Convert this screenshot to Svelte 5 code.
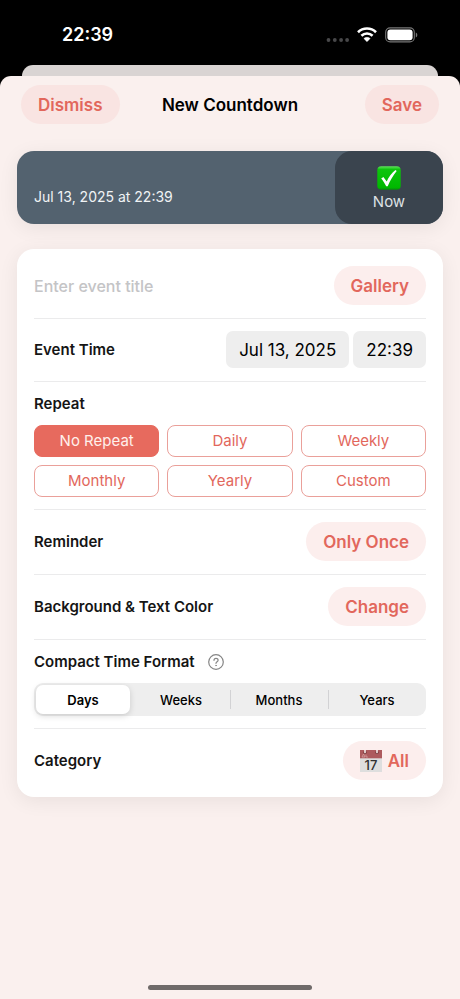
<script>
  const repeatOptions = ['No Repeat', 'Daily', 'Weekly', 'Monthly', 'Yearly', 'Custom'];
  const formats = ['Days', 'Weeks', 'Months', 'Years'];
  let repeat = $state('No Repeat');
  let format = $state('Days');
  let title = $state('');
</script>

<div class="screen">
  <div class="status">
    <span class="clock">22:39</span>
    <div class="indicators">
      <svg width="24" height="6" viewBox="0 0 24 6" fill="#48484a" aria-hidden="true">
        <circle cx="3.500" cy="3" r="1.900" /><circle cx="9.800" cy="3" r="1.900" /><circle cx="16.100" cy="3" r="1.900" /><circle cx="22.100" cy="3" r="1.900" />
      </svg>
      <svg width="20" height="15" viewBox="0 0 20 15" aria-hidden="true">
        <g fill="none" stroke="#fff" stroke-width="2.6">
          <path d="M1 5.2C6 .3 14 .3 19 5.2" />
          <path d="M4.4 8.8c3.2-3 8-3 11.2 0" />
        </g>
        <path d="M10 14.7l-3.2-3.2c1.8-1.6 4.6-1.6 6.4 0z" fill="#fff" stroke="#fff" stroke-width=".4" stroke-linejoin="round" />
      </svg>
      <svg width="33" height="16" viewBox="0 0 33 16" aria-hidden="true">
        <rect x=".7" y=".9" width="28.6" height="14" rx="4.4" fill="none" stroke="#777" stroke-width="1.1" />
        <rect x="2.4" y="2.6" width="25.2" height="10.6" rx="3" fill="#fff" />
        <path d="M30.8 5.4c2 .8 2 4.2 0 5z" fill="#777" />
      </svg>
    </div>
  </div>

  <div class="behind"></div>

  <main class="sheet">
    <header>
      <button class="pill">Dismiss</button>
      <h1>New Countdown</h1>
      <button class="pill">Save</button>
    </header>

    <section class="preview">
      <p class="date">Jul 13, 2025 at 22:39</p>
      <div class="now">
        <svg width="24" height="24" viewBox="0 0 24 24" role="img" aria-label="Done">
          <defs>
            <linearGradient id="green" x2="0" y2="1">
              <stop offset="0" stop-color="#5fe35a" /><stop offset=".14" stop-color="#0dc40d" /><stop offset=".9" stop-color="#00b900" /><stop offset="1" stop-color="#078f0c" />
            </linearGradient>
          </defs>
          <rect x=".3" y=".3" width="23.4" height="23.4" rx="4" fill="url(#green)" />
          <path d="M4.2 12.4l2.2-1.3 3.3 4.5C11.600 11 14.600 7 18.400 3.900l1.300 1C16 9.400 13.200 14.300 10.700 20.300H9.200C7.800 17.400 6.200 14.700 4.200 12.400z" fill="#fff" />
        </svg>
        <span>Now</span>
      </div>
    </section>

    <form class="card" onsubmit={(e) => e.preventDefault()}>
      <div class="row">
        <input class="title" type="text" placeholder="Enter event title" aria-label="Event title" bind:value={title} />
        <button type="button" class="pill">Gallery</button>
      </div>

      <div class="row">
        <h2>Event Time</h2>
        <div class="pickers">
          <button type="button" class="picker">Jul 13, 2025</button>
          <button type="button" class="picker">22:39</button>
        </div>
      </div>

      <fieldset class="block">
        <legend>Repeat</legend>
        <div class="choices">
          {#each repeatOptions as option}
            <label class="choice" class:active={repeat === option}>
              <input type="radio" name="repeat" value={option} bind:group={repeat} />
              {option}
            </label>
          {/each}
        </div>
      </fieldset>

      <div class="row">
        <h2>Reminder</h2>
        <button type="button" class="pill">Only Once</button>
      </div>

      <div class="row">
        <h2>Background &amp; Text Color</h2>
        <button type="button" class="pill">Change</button>
      </div>

      <div class="block" role="radiogroup" aria-labelledby="format-label">
        <div class="heading">
          <h2 id="format-label">Compact Time Format</h2>
          <button type="button" class="help" aria-label="Help">
            <svg width="16" height="16" viewBox="0 0 16 16" fill="none" stroke="#858585" stroke-linecap="round" aria-hidden="true">
              <circle cx="8" cy="8" r="7.300" stroke-width="1.200" />
              <path d="M6 6.300C6 3.700 10.100 3.800 10.100 6.200 10.100 7.700 8 7.700 8 9.300" stroke-width="1.200" />
              <circle cx="8" cy="11.500" r=".45" fill="#858585" stroke-width=".6" />
            </svg>
          </button>
        </div>
        <div class="segments">
          {#each formats as option}
            <label class="segment" class:active={format === option}>
              <input type="radio" name="format" value={option} bind:group={format} />
              {option}
            </label>
          {/each}
        </div>
      </div>

      <div class="row">
        <h2>Category</h2>
        <button type="button" class="pill category">
          <svg width="22" height="22" viewBox="0 0 22 22" aria-hidden="true">
            <rect width="22" height="22" fill="#dedede" />
            <rect width="22" height="8.300" fill="#ad5a5e" />
            <path d="M2 7l1.500-3L5 7zM6 7V4.500M8 7H6" stroke="#d9a5a6" stroke-width=".7" fill="none" />
            <g fill="#6b3033"><circle cx="5" cy="2.400" r="1.600" /><circle cx="17" cy="2.400" r="1.600" /></g>
            <path d="M5 0v2.500M17 0v2.500" stroke="#f4e6e5" stroke-width="1.700" stroke-linecap="round" />
            <text x="11" y="19.500" text-anchor="middle" font-size="13" font-weight="500" fill="#303030">17</text>
          </svg>
          All
        </button>
      </div>
    </form>

    <div class="home"></div>
  </main>
</div>

<style>
  :global(body) { margin: 0; background: #000; }
  .screen {
    min-height: 100vh;
    display: flex;
    flex-direction: column;
    background: #000;
    color: #000;
    font-family: Inter, "Liberation Sans", sans-serif;
  }
  .screen *, .screen { box-sizing: border-box; }
  button, input { font: inherit; color: inherit; margin: 0; }
  button { border: 0; cursor: pointer; white-space: nowrap; }
  h1, h2, p { margin: 0; }

  .status {
    display: flex;
    justify-content: space-between;
    align-items: center;
    height: 65px;
    padding: 4px 42px 0 62px;
    color: #fff;
  }
  .clock { font-size: 18px; font-weight: 600; line-height: 24px; }
  .indicators { display: flex; align-items: center; gap: 8px; }
  .indicators svg:first-child { margin-top: 10px; }

  .behind {
    height: 11px;
    margin: 0 22px;
    border-radius: 11px 11px 0 0;
    background: #d9d4d3;
  }
  .sheet {
    flex: 1;
    display: flex;
    flex-direction: column;
    padding: 9px 17px;
    border-radius: 11px 11px 0 0;
    background: #faf0ee;
  }
  header {
    display: grid;
    grid-template-columns: 1fr auto 1fr;
    align-items: center;
    padding: 0 4px;
  }
  header .pill { justify-self: start; background: #f9e4e2; }
  header .pill:last-child { justify-self: end; }
  h1 { font-size: 17px; font-weight: 600; line-height: 24px; }

  .pill {
    height: 39px;
    padding: 0 17px;
    border-radius: 20px;
    background: #fceeed;
    color: #e2675c;
    font-size: 17px;
    font-weight: 600;
    line-height: 24px;
  }

  .preview {
    display: flex;
    justify-content: space-between;
    height: 73px;
    margin-top: 27px;
    border-radius: 17px;
    background: #53626f;
    box-shadow: 0 4px 20px #00000012;
  }
  .date {
    align-self: flex-end;
    padding: 0 17px 17px;
    color: #f0f3f5;
    font-size: 14px;
    line-height: 20px;
  }
  .now {
    display: flex;
    flex-direction: column;
    align-items: center;
    justify-content: center;
    gap: 2px;
    width: 108px;
    padding-top: 3px;
    border-radius: 17px;
    background: #3a444e;
    color: #dde1e4;
    font-size: 15px;
    line-height: 20px;
  }

  .card {
    margin-top: 25px;
    padding: 5px 17px 4px;
    border-radius: 17px;
    background: #fff;
    box-shadow: 0 4px 20px #00000012;
  }
  .row {
    display: flex;
    align-items: center;
    justify-content: space-between;
    padding: 12px 0 13px;
  }
  h2, legend {
    padding: 0;
    color: #151515;
    font-size: 15px;
    font-weight: 600;
    line-height: 20px;
  }
  .title {
    flex: 1;
    min-width: 0;
    padding: 0;
    border: 0;
    outline: 0;
    background: none;
    font-size: 16px;
    font-weight: 500;
    line-height: 20px;
  }
  .title::placeholder { color: #c4c4c6; opacity: 1; }
  .pickers { display: flex; gap: 4px; }
  .picker {
    height: 37px;
    padding: 0 13px;
    border-radius: 7px;
    background: #eee;
    font-size: 17px;
    line-height: 24px;
  }

  .block {
    min-width: 0;
    margin: 0;
    padding: 12px 0;
    border: 0;
  }
  .card > * + * { border-top: 1px solid #ebebec; }
  legend { float: left; width: 100%; margin-bottom: 11px; }
  .choices {
    clear: both;
    display: grid;
    grid-template-columns: repeat(3, 1fr);
    gap: 8px;
  }
  .choice, .segment {
    position: relative;
    display: flex;
    align-items: center;
    justify-content: center;
    cursor: pointer;
  }
  .choice {
    height: 32px;
    border: 1px solid #eaa09a;
    border-radius: 8px;
    color: #e2675c;
    font-size: 15px;
    line-height: 20px;
  }
  .choice.active { border-color: #e76a5e; background: #e76a5e; color: #fff0ec; }
  .choice input, .segment input {
    position: absolute;
    inset: 0;
    appearance: none;
    cursor: pointer;
  }

  .heading { display: flex; align-items: center; gap: 13px; margin-bottom: 11px; }
  .help { display: flex; padding: 0; background: none; }
  .segments {
    display: grid;
    grid-template-columns: repeat(4, 1fr);
    padding: 2px 0;
    border-radius: 9px;
    background: #eee;
  }
  .segment {
    height: 29px;
    border-radius: 7px;
    font-size: 13px;
    font-weight: 500;
    line-height: 20px;
  }
  .segment.active {
    margin: 0 2px;
    background: #fff;
    box-shadow: 0 2px 6px #00000026;
    font-weight: 600;
  }
  .segment:not(.active) + .segment:not(.active)::before {
    content: "";
    position: absolute;
    left: 0;
    top: 5px;
    bottom: 5px;
    width: 1px;
    background: #d2d2d4;
  }
  .category { display: flex; align-items: center; gap: 6px; }

  .home {
    width: 164px;
    height: 5px;
    margin: auto auto 0;
    border-radius: 3px;
    background: #6f6a69;
  }
</style>
